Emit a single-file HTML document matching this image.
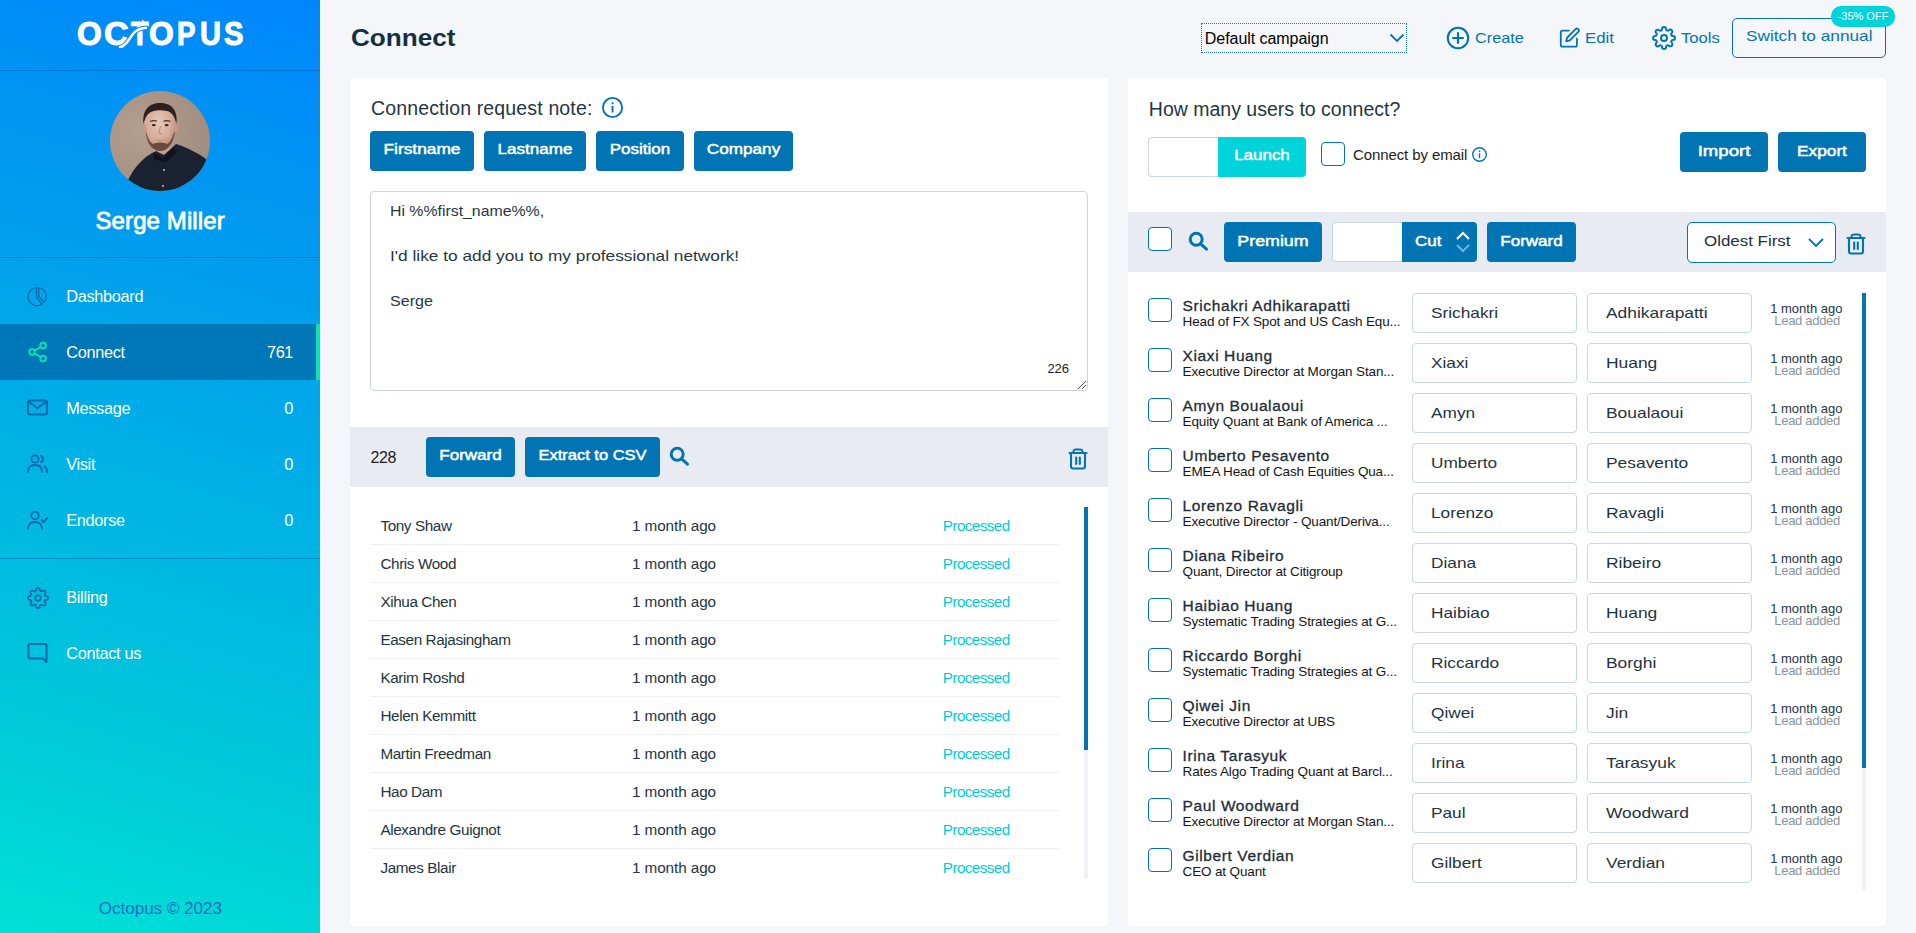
<!DOCTYPE html>
<html><head><meta charset="utf-8"><title>Octopus - Connect</title>
<style>
html,body{margin:0;padding:0;}
body{width:1916px;height:933px;position:relative;overflow:hidden;background:#f5f6fa;font-family:'Liberation Sans', sans-serif;}
.t{position:absolute;line-height:1;white-space:nowrap;}
.r{position:absolute;}
</style></head><body>
<div class="r" id="sb" style="left:0;top:0;width:320px;height:933px;background:linear-gradient(196deg,#0086fc 0%,#00a1ec 33%,#00cada 79%,#00e1d6 100%)"></div>
<div class="r" style="left:0px;top:70px;width:320px;height:1px;background:rgba(0,90,170,0.45)"></div>
<div class="r" style="left:0px;top:257px;width:320px;height:1px;background:rgba(0,90,170,0.45)"></div>
<div class="r" style="left:0px;top:558px;width:320px;height:1px;background:rgba(0,90,170,0.45)"></div>
<div class="t" style="left:77.32083333333333px;top:18.17px;font-size:32.5px;color:#fff;font-weight:700;-webkit-text-stroke:1.1px #fff;transform:scaleX(0.979);transform-origin:0 0;">O</div>
<div class="t" style="left:103.95454545454545px;top:18.17px;font-size:32.5px;color:#fff;font-weight:700;-webkit-text-stroke:1.1px #fff;transform:scaleX(1.045);transform-origin:0 0;">C</div>
<div class="t" style="left:131.0px;top:18.17px;font-size:32.5px;color:#fff;font-weight:700;-webkit-text-stroke:1.1px #fff;transform:scaleX(0.885);transform-origin:0 0;">T</div>
<div class="t" style="left:149.32083333333335px;top:18.17px;font-size:32.5px;color:#fff;font-weight:700;-webkit-text-stroke:1.1px #fff;transform:scaleX(0.979);transform-origin:0 0;">O</div>
<div class="t" style="left:176.79473684210527px;top:18.17px;font-size:32.5px;color:#fff;font-weight:700;-webkit-text-stroke:1.1px #fff;transform:scaleX(0.853);transform-origin:0 0;">P</div>
<div class="t" style="left:200.1095238095238px;top:18.17px;font-size:32.5px;color:#fff;font-weight:700;-webkit-text-stroke:1.1px #fff;transform:scaleX(0.890);transform-origin:0 0;">U</div>
<div class="t" style="left:223.9px;top:18.17px;font-size:32.5px;color:#fff;font-weight:700;-webkit-text-stroke:1.1px #fff;transform:scaleX(0.895);transform-origin:0 0;">S</div>
<svg class="r" style="left:100px;top:10px;" width="60" height="45" viewBox="0 0 60 45" fill="none"><path d="M20 37 C26 36.5 29 29 32.5 24.5 C35.5 20.5 39 18.5 46 17.8" stroke="#0089f7" stroke-width="4.6" stroke-linecap="round" fill="none"/><path d="M20 37 C26 36.5 29 29 32.5 24.5 C35.5 20.5 39 18.5 46 17.8" stroke="#fff" stroke-width="2.6" stroke-linecap="round" fill="none"/><path d="M42.5 10.5 L45 13" stroke="#fff" stroke-width="1.2" stroke-linecap="round" fill="none"/></svg>
<svg class="r" style="left:110px;top:91px;" width="100" height="100" viewBox="0 0 100 100" fill="none"><defs><clipPath id="av"><circle cx="50" cy="50" r="50"/></clipPath><radialGradient id="bgav" cx="0.3" cy="0.4" r="0.8"><stop offset="0" stop-color="#b39e90"/><stop offset="1" stop-color="#9f8a7d"/></radialGradient><radialGradient id="face" cx="0.45" cy="0.4" r="0.6"><stop offset="0" stop-color="#e6c7b6"/><stop offset="0.7" stop-color="#d4ab97"/><stop offset="1" stop-color="#b98f7d"/></radialGradient></defs><g clip-path="url(#av)"><rect width="100" height="100" fill="url(#bgav)"/><path d="M42 50 L60 48 L62 62 L44 64Z" fill="#c89c88"/><path d="M14 100 C18 86 26 74 36 66 C40 63 44 61 46 60 L54 64 L66 53 C76 56 88 62 96 68 L100 100Z" fill="#1a2232"/><path d="M44 61 L53 68 L64 56 L66 62 L56 72 L44 68Z" fill="#0e131c"/><ellipse cx="50" cy="35.5" rx="15.5" ry="22" fill="url(#face)"/><path d="M35.5 38 C36 52 42 60 50 60 C58 60 64.5 52 65 38 C63 46 60 52 57 53 C53 51 47 51 43 53 C40 52 37 46 35.5 38Z" fill="#5e4239" opacity="0.9"/><path d="M43 47.5 C47 49.5 53 49.5 57 47.5 C54 50 46 50 43 47.5Z" fill="#8a5a50"/><path d="M33.5 33 C32 18 40 12 50 12 C61 12 68 18 66.5 33 C65 26 62 21 57 20 C52 19 45 19 41 21 C37 23 35 27 33.5 33Z" fill="#2a201e"/><path d="M40 30.5 Q43.5 28.8 47 30.2 M53.5 30.2 Q57 28.8 60.5 30.5" stroke="#4a342c" stroke-width="1.2" fill="none"/><ellipse cx="43.8" cy="34.2" rx="2" ry="1.1" fill="#3b2a24"/><ellipse cx="56.6" cy="34.2" rx="2" ry="1.1" fill="#3b2a24"/><path d="M50.5 35 L49 42.5 L52 43" stroke="#b98a76" stroke-width="1" fill="none"/><ellipse cx="34.5" cy="37" rx="2" ry="4" fill="#c99b86"/><ellipse cx="65.5" cy="37" rx="2" ry="4" fill="#c99b86"/><circle cx="54" cy="79" r="0.9" fill="#d0d0d0"/><circle cx="53" cy="95" r="0.9" fill="#d0d0d0"/></g></svg>
<div class="t" style="left:95.5px;top:209.40px;font-size:24px;color:#fff;letter-spacing:0.1px;-webkit-text-stroke:0.8px #fff;">Serge Miller</div>
<div class="r" style="left:0px;top:324px;width:320px;height:56px;background:#0077b6"></div>
<div class="r" style="left:316px;top:324px;width:4px;height:56px;background:#00e6b4"></div>
<div class="t" style="left:66.2px;top:288.14px;font-size:16.3px;color:#fff;letter-spacing:-0.3px;">Dashboard</div>
<div class="t" style="left:66.2px;top:344.14px;font-size:16.3px;color:#fff;letter-spacing:-0.3px;">Connect</div>
<div class="t" style="left:193px;top:344.14px;font-size:16.3px;color:#fff;letter-spacing:-0.4px;width:100px;text-align:right;">761</div>
<div class="t" style="left:66.2px;top:400.14px;font-size:16.3px;color:#fff;letter-spacing:-0.3px;">Message</div>
<div class="t" style="left:193px;top:400.14px;font-size:16.3px;color:#fff;letter-spacing:-0.4px;width:100px;text-align:right;">0</div>
<div class="t" style="left:66.2px;top:456.14px;font-size:16.3px;color:#fff;letter-spacing:-0.3px;">Visit</div>
<div class="t" style="left:193px;top:456.14px;font-size:16.3px;color:#fff;letter-spacing:-0.4px;width:100px;text-align:right;">0</div>
<div class="t" style="left:66.2px;top:512.14px;font-size:16.3px;color:#fff;letter-spacing:-0.3px;">Endorse</div>
<div class="t" style="left:193px;top:512.14px;font-size:16.3px;color:#fff;letter-spacing:-0.4px;width:100px;text-align:right;">0</div>
<div class="t" style="left:66.2px;top:589.14px;font-size:16.3px;color:#fff;letter-spacing:-0.3px;">Billing</div>
<div class="t" style="left:66.2px;top:645.14px;font-size:16.3px;color:#fff;letter-spacing:-0.3px;">Contact us</div>
<svg class="r" style="left:27px;top:286px;" width="21" height="21" viewBox="-10.5 -10.5 21 21" fill="none"><g stroke="#0b6aae" stroke-width="1.3" stroke-linejoin="round" fill="none"><path d="M-1 -8.9 L-1 0.6 L4.4 7.7 A9 9 0 1 1 -1 -8.9 Z"/><path d="M1.2 -8.9 L1.2 -0.3 L6.5 5.8 A9 9 0 0 0 1.2 -8.9 Z"/></g></svg>
<svg class="r" style="left:27px;top:341px;" width="22" height="22" viewBox="0 0 24 24" fill="none"><g stroke="#00ecb4" stroke-width="1.9" fill="none"><circle cx="17.5" cy="5" r="3.1"/><circle cx="5.5" cy="12" r="3.1"/><circle cx="17.5" cy="19" r="3.1"/><line x1="8.2" y1="13.6" x2="14.8" y2="17.4"/><line x1="14.8" y1="6.6" x2="8.2" y2="10.4"/></g></svg>
<svg class="r" style="left:26px;top:397px;" width="23" height="21" viewBox="0 0 23 21" fill="none"><g stroke="#0b6aae" stroke-width="2" fill="none" stroke-linejoin="round"><rect x="2" y="3.5" width="19" height="14" rx="2"/><path d="M2.5 4.5 L11.5 11 L20.5 4.5"/></g></svg>
<svg class="r" style="left:26px;top:453px;" width="23" height="21" viewBox="0 0 23 21" fill="none"><g stroke="#0b6aae" stroke-width="1.8" fill="none" stroke-linecap="round"><circle cx="9" cy="6" r="3.6"/><path d="M2 19 C2 14 5 12 9 12 C13 12 16 14 16 19"/><path d="M15 2.8 C17.5 3.5 17.5 8.5 15 9.2"/><path d="M18.5 13.5 C20.5 14.5 21 16.5 21 19"/></g></svg>
<svg class="r" style="left:26px;top:509px;" width="23" height="22" viewBox="0 0 23 22" fill="none"><g stroke="#0b6aae" stroke-width="1.8" fill="none" stroke-linecap="round" stroke-linejoin="round"><circle cx="9" cy="6.5" r="3.8"/><path d="M2 20 C2 15 5 13 9 13 C13 13 16 15 16 20"/><path d="M15.5 11 L17.5 13 L21.5 9"/></g></svg>
<svg class="r" style="left:26.5px;top:586.5px;" width="22" height="22" viewBox="0 0 24 24" fill="none"><g stroke="#0b6aae" stroke-width="1.9" fill="none"><path d="M12 15a3 3 0 1 0 0-6 3 3 0 0 0 0 6z"/><path d="M19.4 15a1.65 1.65 0 0 0 .33 1.82l.06.06a2 2 0 0 1 0 2.83 2 2 0 0 1-2.83 0l-.06-.06a1.65 1.65 0 0 0-1.82-.33 1.65 1.65 0 0 0-1 1.51V21a2 2 0 0 1-2 2 2 2 0 0 1-2-2v-.09A1.65 1.65 0 0 0 9 19.4a1.65 1.65 0 0 0-1.82.33l-.06.06a2 2 0 0 1-2.83 0 2 2 0 0 1 0-2.83l.06-.06a1.65 1.65 0 0 0 .33-1.82 1.65 1.65 0 0 0-1.51-1H3a2 2 0 0 1-2-2 2 2 0 0 1 2-2h.09A1.65 1.65 0 0 0 4.6 9a1.65 1.65 0 0 0-.33-1.82l-.06-.06a2 2 0 0 1 0-2.83 2 2 0 0 1 2.83 0l.06.06a1.65 1.65 0 0 0 1.82.33H9a1.65 1.65 0 0 0 1-1.51V3a2 2 0 0 1 2-2 2 2 0 0 1 2 2v.09a1.65 1.65 0 0 0 1 1.51 1.65 1.65 0 0 0 1.82-.33l.06-.06a2 2 0 0 1 2.83 0 2 2 0 0 1 0 2.83l-.06.06a1.65 1.65 0 0 0-.33 1.82V9a1.65 1.65 0 0 0 1.51 1H21a2 2 0 0 1 2 2 2 2 0 0 1-2 2h-.09a1.65 1.65 0 0 0-1.51 1z"/></g></svg>
<svg class="r" style="left:27px;top:642px;" width="21" height="22" viewBox="0 0 21 22" fill="none"><g stroke="#0b6aae" stroke-width="2" fill="none" stroke-linejoin="round"><path d="M3 2 H18 A1.5 1.5 0 0 1 19.5 3.5 V20 L16 16.5 H3 A1.5 1.5 0 0 1 1.5 15 V3.5 A1.5 1.5 0 0 1 3 2Z"/></g></svg>
<div class="t" style="left:98.8px;top:900.35px;font-size:17px;color:#1570c0;">Octopus © 2023</div>
<div class="t" style="left:351px;top:26.00px;font-size:24px;color:#15303f;transform:scaleX(1.089);transform-origin:0 0;font-weight:700;">Connect</div>
<div class="r" style="left:1201px;top:23px;width:206px;height:30px;border:1px dotted #1a78b8;box-sizing:border-box"></div>
<div class="t" style="left:1204.8px;top:30.80px;font-size:16px;color:#000;letter-spacing:-0.05px;">Default campaign</div>
<svg class="r" style="left:1389px;top:32px;" width="16" height="12" viewBox="0 0 16 12" fill="none"><path d="M1.5 2.5 L8 9 L14.5 2.5" stroke="#0175b3" stroke-width="1.8" fill="none"/></svg>
<svg class="r" style="left:1446px;top:26px;" width="24" height="24" viewBox="0 0 24 24" fill="none"><g stroke="#0175b3" stroke-width="2.1" fill="none" stroke-linecap="round"><circle cx="12" cy="12" r="10.2"/><line x1="12" y1="7" x2="12" y2="17"/><line x1="7" y1="12" x2="17" y2="12"/></g></svg>
<div class="t" style="left:1474.6px;top:30.15px;font-size:15px;color:#0175b3;transform:scaleX(1.087);transform-origin:0 0;">Create</div>
<svg class="r" style="left:1559.3px;top:27px;" width="21.5" height="21.5" viewBox="0 0 24 24" fill="none"><g stroke="#0175b3" stroke-width="2" fill="none" stroke-linecap="round" stroke-linejoin="round"><path d="M11 4H4a2 2 0 0 0-2 2v14a2 2 0 0 0 2 2h14a2 2 0 0 0 2-2v-7"/><path d="M18.5 2.5a2.121 2.121 0 0 1 3 3L12 15l-4 1 1-4 9.5-9.5z"/></g></svg>
<div class="t" style="left:1585.2px;top:30.15px;font-size:15px;color:#0175b3;transform:scaleX(1.12);transform-origin:0 0;">Edit</div>
<svg class="r" style="left:1652px;top:26px;" width="24" height="24" viewBox="0 0 24 24" fill="none"><g stroke="#0175b3" stroke-width="2" fill="none"><path d="M12 15a3 3 0 1 0 0-6 3 3 0 0 0 0 6z"/><path d="M19.4 15a1.65 1.65 0 0 0 .33 1.82l.06.06a2 2 0 0 1 0 2.83 2 2 0 0 1-2.83 0l-.06-.06a1.65 1.65 0 0 0-1.82-.33 1.65 1.65 0 0 0-1 1.51V21a2 2 0 0 1-2 2 2 2 0 0 1-2-2v-.09A1.65 1.65 0 0 0 9 19.4a1.65 1.65 0 0 0-1.82.33l-.06.06a2 2 0 0 1-2.83 0 2 2 0 0 1 0-2.83l.06-.06a1.65 1.65 0 0 0 .33-1.82 1.65 1.65 0 0 0-1.51-1H3a2 2 0 0 1-2-2 2 2 0 0 1 2-2h.09A1.65 1.65 0 0 0 4.6 9a1.65 1.65 0 0 0-.33-1.82l-.06-.06a2 2 0 0 1 0-2.83 2 2 0 0 1 2.83 0l.06.06a1.65 1.65 0 0 0 1.82.33H9a1.65 1.65 0 0 0 1-1.51V3a2 2 0 0 1 2-2 2 2 0 0 1 2 2v.09a1.65 1.65 0 0 0 1 1.51 1.65 1.65 0 0 0 1.82-.33l.06-.06a2 2 0 0 1 2.83 0 2 2 0 0 1 0 2.83l-.06.06a1.65 1.65 0 0 0-.33 1.82V9a1.65 1.65 0 0 0 1.51 1H21a2 2 0 0 1 2 2 2 2 0 0 1-2 2h-.09a1.65 1.65 0 0 0-1.51 1z"/></g></svg>
<div class="t" style="left:1680.7px;top:29.95px;font-size:15px;color:#0175b3;transform:scaleX(1.106);transform-origin:0 0;">Tools</div>
<div class="r" style="left:1732px;top:18px;width:154px;height:40px;border:1px solid #0175b3;border-radius:5px;box-sizing:border-box"></div>
<div class="t" style="left:1745.8px;top:27.95px;font-size:15px;color:#0175b3;transform:scaleX(1.149);transform-origin:0 0;">Switch to annual</div>
<div class="r" style="left:1831px;top:6px;width:64px;height:20.5px;background:#00d3da;border-radius:10px"></div>
<div class="t" style="left:1831px;top:10.85px;font-size:11px;color:#fff;width:64px;text-align:center;">-35% OFF</div>
<div class="r" style="left:350px;top:78px;width:758px;height:848px;background:#fff;border-radius:4px"></div>
<div class="t" style="left:371px;top:98.62px;font-size:19.5px;color:#233642;letter-spacing:0.15px;">Connection request note:</div>
<svg class="r" style="left:601px;top:96px;" width="23" height="23" viewBox="0 0 23 23" fill="none"><g stroke="#0175b3" stroke-width="1.9" fill="none"><circle cx="11.5" cy="11.5" r="9.6"/></g><rect x="10.6" y="10" width="1.9" height="6.5" fill="#0175b3"/><circle cx="11.55" cy="7.3" r="1.15" fill="#0175b3"/></svg>
<div class="r" style="left:370px;top:131px;width:104px;height:40px;background:#0175b3;border-radius:4px"></div>
<div class="t" style="left:370px;top:141.25px;font-size:15px;color:#fff;transform:scaleX(1.154);transform-origin:50% 0;width:104px;text-align:center;-webkit-text-stroke:0.5px #fff;">Firstname</div>
<div class="r" style="left:484px;top:131px;width:102px;height:40px;background:#0175b3;border-radius:4px"></div>
<div class="t" style="left:484px;top:141.25px;font-size:15px;color:#fff;transform:scaleX(1.135);transform-origin:50% 0;width:102px;text-align:center;-webkit-text-stroke:0.5px #fff;">Lastname</div>
<div class="r" style="left:596px;top:131px;width:88px;height:40px;background:#0175b3;border-radius:4px"></div>
<div class="t" style="left:596px;top:141.25px;font-size:15px;color:#fff;transform:scaleX(1.133);transform-origin:50% 0;width:88px;text-align:center;-webkit-text-stroke:0.5px #fff;">Position</div>
<div class="r" style="left:694px;top:131px;width:99px;height:40px;background:#0175b3;border-radius:4px"></div>
<div class="t" style="left:694px;top:141.25px;font-size:15px;color:#fff;transform:scaleX(1.145);transform-origin:50% 0;width:99px;text-align:center;-webkit-text-stroke:0.5px #fff;">Company</div>
<div class="r" style="left:370px;top:191px;width:718px;height:200px;border:1px solid #c9d6df;border-radius:4px;box-sizing:border-box"></div>
<div class="t" style="left:389.9px;top:203.25px;font-size:15px;color:#28363f;transform:scaleX(1.056);transform-origin:0 0;">Hi %%first_name%%,</div>
<div class="t" style="left:389.9px;top:248.25px;font-size:15px;color:#28363f;transform:scaleX(1.152);transform-origin:0 0;">I'd like to add you to my professional network!</div>
<div class="t" style="left:389.9px;top:292.75px;font-size:15px;color:#28363f;transform:scaleX(1.07);transform-origin:0 0;">Serge</div>
<div class="t" style="left:1047.4px;top:361.95px;font-size:13px;color:#222;">226</div>
<svg class="r" style="left:1077px;top:380px;" width="10" height="10" viewBox="0 0 10 10" fill="none"><g stroke="#555" stroke-width="1"><line x1="1" y1="9" x2="9" y2="1"/><line x1="5" y1="9" x2="9" y2="5"/></g></svg>
<div class="r" style="left:350px;top:427px;width:758px;height:60px;background:#e8ebf2"></div>
<div class="t" style="left:370.6px;top:449.90px;font-size:16px;color:#222;letter-spacing:-0.5px;">228</div>
<div class="r" style="left:426px;top:437px;width:89px;height:40px;background:#0175b3;border-radius:4px"></div>
<div class="t" style="left:426px;top:447.25px;font-size:15px;color:#fff;transform:scaleX(1.135);transform-origin:50% 0;width:89px;text-align:center;-webkit-text-stroke:0.5px #fff;">Forward</div>
<div class="r" style="left:525px;top:437px;width:135px;height:40px;background:#0175b3;border-radius:4px"></div>
<div class="t" style="left:525px;top:447.25px;font-size:15px;color:#fff;transform:scaleX(1.1);transform-origin:50% 0;width:135px;text-align:center;-webkit-text-stroke:0.5px #fff;">Extract to CSV</div>
<svg class="r" style="left:669px;top:446px;" width="21" height="21" viewBox="0 0 21 21" fill="none"><g stroke="#0175b3" stroke-width="3" fill="none" stroke-linecap="round"><circle cx="8.2" cy="8.2" r="6"/><line x1="12.6" y1="12.8" x2="18.5" y2="18.2"/></g></svg>
<svg class="r" style="left:1068px;top:448px;" width="20" height="22" viewBox="0 0 20 22" fill="none"><g stroke="#0175b3" stroke-width="2.1" fill="none" stroke-linecap="round" stroke-linejoin="round"><line x1="1.5" y1="5" x2="18.5" y2="5"/><path d="M5.5 5 V3.2 A2 2 0 0 1 7.5 1.5 H12.5 A2 2 0 0 1 14.5 3.2 V5"/><path d="M3 5 V18.5 A2 2 0 0 0 5 20.5 H15 A2 2 0 0 0 17 18.5 V5"/><line x1="8.2" y1="9.5" x2="8.2" y2="16"/><line x1="11.8" y1="9.5" x2="11.8" y2="16"/></g></svg>
<div class="r" style="left:350px;top:505px;width:758px;height:374px;overflow:hidden">
<div class="t" style="left:30.399999999999977px;top:13.00px;font-size:15.3px;color:#26343e;letter-spacing:-0.4px;">Tony Shaw</div>
<div class="t" style="left:282px;top:13.00px;font-size:15.3px;color:#26343e;letter-spacing:-0.1px;">1 month ago</div>
<div class="t" style="left:592.8px;top:13.00px;font-size:15.3px;color:#00cdd6;letter-spacing:-0.6px;">Processed</div>
<div class="r" style="left:20px;top:39px;width:689px;height:1px;background:#edf0f5"></div>
<div class="t" style="left:30.399999999999977px;top:51.00px;font-size:15.3px;color:#26343e;letter-spacing:-0.4px;">Chris Wood</div>
<div class="t" style="left:282px;top:51.00px;font-size:15.3px;color:#26343e;letter-spacing:-0.1px;">1 month ago</div>
<div class="t" style="left:592.8px;top:51.00px;font-size:15.3px;color:#00cdd6;letter-spacing:-0.6px;">Processed</div>
<div class="r" style="left:20px;top:77px;width:689px;height:1px;background:#edf0f5"></div>
<div class="t" style="left:30.399999999999977px;top:89.00px;font-size:15.3px;color:#26343e;letter-spacing:-0.4px;">Xihua Chen</div>
<div class="t" style="left:282px;top:89.00px;font-size:15.3px;color:#26343e;letter-spacing:-0.1px;">1 month ago</div>
<div class="t" style="left:592.8px;top:89.00px;font-size:15.3px;color:#00cdd6;letter-spacing:-0.6px;">Processed</div>
<div class="r" style="left:20px;top:115px;width:689px;height:1px;background:#edf0f5"></div>
<div class="t" style="left:30.399999999999977px;top:127.00px;font-size:15.3px;color:#26343e;letter-spacing:-0.4px;">Easen Rajasingham</div>
<div class="t" style="left:282px;top:127.00px;font-size:15.3px;color:#26343e;letter-spacing:-0.1px;">1 month ago</div>
<div class="t" style="left:592.8px;top:127.00px;font-size:15.3px;color:#00cdd6;letter-spacing:-0.6px;">Processed</div>
<div class="r" style="left:20px;top:153px;width:689px;height:1px;background:#edf0f5"></div>
<div class="t" style="left:30.399999999999977px;top:165.00px;font-size:15.3px;color:#26343e;letter-spacing:-0.4px;">Karim Roshd</div>
<div class="t" style="left:282px;top:165.00px;font-size:15.3px;color:#26343e;letter-spacing:-0.1px;">1 month ago</div>
<div class="t" style="left:592.8px;top:165.00px;font-size:15.3px;color:#00cdd6;letter-spacing:-0.6px;">Processed</div>
<div class="r" style="left:20px;top:191px;width:689px;height:1px;background:#edf0f5"></div>
<div class="t" style="left:30.399999999999977px;top:203.00px;font-size:15.3px;color:#26343e;letter-spacing:-0.4px;">Helen Kemmitt</div>
<div class="t" style="left:282px;top:203.00px;font-size:15.3px;color:#26343e;letter-spacing:-0.1px;">1 month ago</div>
<div class="t" style="left:592.8px;top:203.00px;font-size:15.3px;color:#00cdd6;letter-spacing:-0.6px;">Processed</div>
<div class="r" style="left:20px;top:229px;width:689px;height:1px;background:#edf0f5"></div>
<div class="t" style="left:30.399999999999977px;top:241.00px;font-size:15.3px;color:#26343e;letter-spacing:-0.4px;">Martin Freedman</div>
<div class="t" style="left:282px;top:241.00px;font-size:15.3px;color:#26343e;letter-spacing:-0.1px;">1 month ago</div>
<div class="t" style="left:592.8px;top:241.00px;font-size:15.3px;color:#00cdd6;letter-spacing:-0.6px;">Processed</div>
<div class="r" style="left:20px;top:267px;width:689px;height:1px;background:#edf0f5"></div>
<div class="t" style="left:30.399999999999977px;top:279.00px;font-size:15.3px;color:#26343e;letter-spacing:-0.4px;">Hao Dam</div>
<div class="t" style="left:282px;top:279.00px;font-size:15.3px;color:#26343e;letter-spacing:-0.1px;">1 month ago</div>
<div class="t" style="left:592.8px;top:279.00px;font-size:15.3px;color:#00cdd6;letter-spacing:-0.6px;">Processed</div>
<div class="r" style="left:20px;top:305px;width:689px;height:1px;background:#edf0f5"></div>
<div class="t" style="left:30.399999999999977px;top:317.00px;font-size:15.3px;color:#26343e;letter-spacing:-0.4px;">Alexandre Guignot</div>
<div class="t" style="left:282px;top:317.00px;font-size:15.3px;color:#26343e;letter-spacing:-0.1px;">1 month ago</div>
<div class="t" style="left:592.8px;top:317.00px;font-size:15.3px;color:#00cdd6;letter-spacing:-0.6px;">Processed</div>
<div class="r" style="left:20px;top:343px;width:689px;height:1px;background:#edf0f5"></div>
<div class="t" style="left:30.399999999999977px;top:355.00px;font-size:15.3px;color:#26343e;letter-spacing:-0.4px;">James Blair</div>
<div class="t" style="left:282px;top:355.00px;font-size:15.3px;color:#26343e;letter-spacing:-0.1px;">1 month ago</div>
<div class="t" style="left:592.8px;top:355.00px;font-size:15.3px;color:#00cdd6;letter-spacing:-0.6px;">Processed</div>
<div class="r" style="left:20px;top:381px;width:689px;height:1px;background:#edf0f5"></div>
</div>
<div class="r" style="left:1084px;top:507px;width:4px;height:372px;background:#f1f3f8"></div>
<div class="r" style="left:1084px;top:507px;width:4px;height:243px;background:#0175b3"></div>
<div class="r" style="left:1128px;top:78px;width:758px;height:848px;background:#fff;border-radius:4px"></div>
<div class="t" style="left:1148.8px;top:99.52px;font-size:19.5px;color:#233642;">How many users to connect?</div>
<div class="r" style="left:1148px;top:137px;width:70px;height:40px;border:1px solid #c9d6df;border-right:none;border-radius:4px 0 0 4px;box-sizing:border-box"></div>
<div class="r" style="left:1218px;top:137px;width:88px;height:40px;background:#00d3da;border-radius:0 4px 4px 0"></div>
<div class="t" style="left:1218px;top:147.25px;font-size:15px;color:#fff;transform:scaleX(1.13);transform-origin:50% 0;width:88px;text-align:center;-webkit-text-stroke:0.5px #fff;">Launch</div>
<div class="r" style="left:1321px;top:142px;width:24px;height:24px;border:1.5px solid #0175b3;border-radius:4px;box-sizing:border-box"></div>
<div class="t" style="left:1353px;top:147.45px;font-size:15px;color:#222;letter-spacing:-0.1px;">Connect by email</div>
<svg class="r" style="left:1471px;top:146px;" width="17" height="17" viewBox="0 0 17 17" fill="none"><circle cx="8.5" cy="8.5" r="6.8" stroke="#0175b3" stroke-width="1.4" fill="none"/><rect x="7.8" y="7.3" width="1.4" height="4.8" fill="#0175b3"/><circle cx="8.5" cy="5.3" r="0.9" fill="#0175b3"/></svg>
<div class="r" style="left:1680px;top:132px;width:88px;height:40px;background:#0175b3;border-radius:4px"></div>
<div class="t" style="left:1680px;top:142.75px;font-size:15px;color:#fff;transform:scaleX(1.24);transform-origin:50% 0;width:88px;text-align:center;-webkit-text-stroke:0.5px #fff;">Import</div>
<div class="r" style="left:1778px;top:132px;width:88px;height:40px;background:#0175b3;border-radius:4px"></div>
<div class="t" style="left:1778px;top:142.75px;font-size:15px;color:#fff;transform:scaleX(1.15);transform-origin:50% 0;width:88px;text-align:center;-webkit-text-stroke:0.5px #fff;">Export</div>
<div class="r" style="left:1128px;top:212px;width:758px;height:60px;background:#e8ebf2"></div>
<div class="r" style="left:1148px;top:227px;width:24px;height:24px;background:#fff;border:1.5px solid #0175b3;border-radius:4px;box-sizing:border-box"></div>
<svg class="r" style="left:1188px;top:231px;" width="21" height="21" viewBox="0 0 21 21" fill="none"><g stroke="#0175b3" stroke-width="3" fill="none" stroke-linecap="round"><circle cx="8.2" cy="8.2" r="6"/><line x1="12.6" y1="12.8" x2="18.5" y2="18.2"/></g></svg>
<div class="r" style="left:1224px;top:222px;width:98px;height:40px;background:#0175b3;border-radius:4px"></div>
<div class="t" style="left:1224px;top:233.25px;font-size:15px;color:#fff;transform:scaleX(1.187);transform-origin:50% 0;width:98px;text-align:center;-webkit-text-stroke:0.5px #fff;">Premium</div>
<div class="r" style="left:1332px;top:222px;width:70px;height:40px;background:#fff;border:1px solid #c9d6df;border-right:none;border-radius:4px 0 0 4px;box-sizing:border-box"></div>
<div class="r" style="left:1402px;top:222px;width:75px;height:40px;background:#0175b3;border-radius:0 4px 4px 0"></div>
<div class="r" style="left:1449px;top:222px;width:1px;height:40px;background:rgba(0,40,80,0.12)"></div>
<div class="t" style="left:1415.2px;top:233.25px;font-size:15px;color:#fff;transform:scaleX(1.133);transform-origin:0 0;-webkit-text-stroke:0.5px #fff;">Cut</div>
<svg class="r" style="left:1455px;top:230px;" width="16" height="24" viewBox="0 0 16 24" fill="none"><path d="M2 9 L8 3 L14 9" stroke="#fff" stroke-width="2" fill="none"/><path d="M2 15 L8 21 L14 15" stroke="rgba(255,255,255,0.45)" stroke-width="2" fill="none"/></svg>
<div class="r" style="left:1487px;top:222px;width:89px;height:40px;background:#0175b3;border-radius:4px"></div>
<div class="t" style="left:1487px;top:233.25px;font-size:15px;color:#fff;transform:scaleX(1.135);transform-origin:50% 0;width:89px;text-align:center;-webkit-text-stroke:0.5px #fff;">Forward</div>
<div class="r" style="left:1687px;top:222px;width:149px;height:41px;background:#fff;border:1px solid #0175b3;border-radius:5px;box-sizing:border-box"></div>
<div class="t" style="left:1703.5px;top:233.25px;font-size:15px;color:#1c2f3b;transform:scaleX(1.128);transform-origin:0 0;">Oldest First</div>
<svg class="r" style="left:1807px;top:236px;" width="18" height="13" viewBox="0 0 18 13" fill="none"><path d="M2 3 L9 10 L16 3" stroke="#0175b3" stroke-width="1.9" fill="none"/></svg>
<svg class="r" style="left:1846px;top:233px;" width="20" height="22" viewBox="0 0 20 22" fill="none"><g stroke="#0175b3" stroke-width="2.1" fill="none" stroke-linecap="round" stroke-linejoin="round"><line x1="1.5" y1="5" x2="18.5" y2="5"/><path d="M5.5 5 V3.2 A2 2 0 0 1 7.5 1.5 H12.5 A2 2 0 0 1 14.5 3.2 V5"/><path d="M3 5 V18.5 A2 2 0 0 0 5 20.5 H15 A2 2 0 0 0 17 18.5 V5"/><line x1="8.2" y1="9.5" x2="8.2" y2="16"/><line x1="11.8" y1="9.5" x2="11.8" y2="16"/></g></svg>
<div class="r" style="left:1148px;top:298px;width:24px;height:24px;border:1.5px solid #0175b3;border-radius:4px;box-sizing:border-box"></div>
<div class="t" style="left:1182.6px;top:297.62px;font-size:15.5px;color:#1d2c37;letter-spacing:0.6px;-webkit-text-stroke:0.3px #1d2c37;">Srichakri Adhikarapatti</div>
<div class="t" style="left:1182.6px;top:315.32px;font-size:13.5px;color:#151515;letter-spacing:-0.15px;">Head of FX Spot and US Cash Equ...</div>
<div class="r" style="left:1412px;top:293px;width:165px;height:40px;border:1px solid #c9d6df;border-radius:4px;box-sizing:border-box"></div>
<div class="r" style="left:1587px;top:293px;width:165px;height:40px;border:1px solid #c9d6df;border-radius:4px;box-sizing:border-box"></div>
<div class="t" style="left:1430.7px;top:305.25px;font-size:15px;color:#1f3340;transform:scaleX(1.15);transform-origin:0 0;">Srichakri</div>
<div class="t" style="left:1606.2px;top:305.25px;font-size:15px;color:#1f3340;transform:scaleX(1.16);transform-origin:0 0;">Adhikarapatti</div>
<div class="t" style="left:1770.2px;top:301.75px;font-size:13px;color:#26343e;">1 month ago</div>
<div class="t" style="left:1774.3px;top:314.35px;font-size:13px;color:#8796a1;letter-spacing:-0.3px;">Lead added</div>
<div class="r" style="left:1148px;top:348px;width:24px;height:24px;border:1.5px solid #0175b3;border-radius:4px;box-sizing:border-box"></div>
<div class="t" style="left:1182.6px;top:347.62px;font-size:15.5px;color:#1d2c37;letter-spacing:0.6px;-webkit-text-stroke:0.3px #1d2c37;">Xiaxi Huang</div>
<div class="t" style="left:1182.6px;top:365.32px;font-size:13.5px;color:#151515;letter-spacing:-0.15px;">Executive Director at Morgan Stan...</div>
<div class="r" style="left:1412px;top:343px;width:165px;height:40px;border:1px solid #c9d6df;border-radius:4px;box-sizing:border-box"></div>
<div class="r" style="left:1587px;top:343px;width:165px;height:40px;border:1px solid #c9d6df;border-radius:4px;box-sizing:border-box"></div>
<div class="t" style="left:1430.7px;top:355.25px;font-size:15px;color:#1f3340;transform:scaleX(1.15);transform-origin:0 0;">Xiaxi</div>
<div class="t" style="left:1606.2px;top:355.25px;font-size:15px;color:#1f3340;transform:scaleX(1.16);transform-origin:0 0;">Huang</div>
<div class="t" style="left:1770.2px;top:351.75px;font-size:13px;color:#26343e;">1 month ago</div>
<div class="t" style="left:1774.3px;top:364.35px;font-size:13px;color:#8796a1;letter-spacing:-0.3px;">Lead added</div>
<div class="r" style="left:1148px;top:398px;width:24px;height:24px;border:1.5px solid #0175b3;border-radius:4px;box-sizing:border-box"></div>
<div class="t" style="left:1182.6px;top:397.62px;font-size:15.5px;color:#1d2c37;letter-spacing:0.6px;-webkit-text-stroke:0.3px #1d2c37;">Amyn Boualaoui</div>
<div class="t" style="left:1182.6px;top:415.32px;font-size:13.5px;color:#151515;letter-spacing:-0.15px;">Equity Quant at Bank of America ...</div>
<div class="r" style="left:1412px;top:393px;width:165px;height:40px;border:1px solid #c9d6df;border-radius:4px;box-sizing:border-box"></div>
<div class="r" style="left:1587px;top:393px;width:165px;height:40px;border:1px solid #c9d6df;border-radius:4px;box-sizing:border-box"></div>
<div class="t" style="left:1430.7px;top:405.25px;font-size:15px;color:#1f3340;transform:scaleX(1.15);transform-origin:0 0;">Amyn</div>
<div class="t" style="left:1606.2px;top:405.25px;font-size:15px;color:#1f3340;transform:scaleX(1.16);transform-origin:0 0;">Boualaoui</div>
<div class="t" style="left:1770.2px;top:401.75px;font-size:13px;color:#26343e;">1 month ago</div>
<div class="t" style="left:1774.3px;top:414.35px;font-size:13px;color:#8796a1;letter-spacing:-0.3px;">Lead added</div>
<div class="r" style="left:1148px;top:448px;width:24px;height:24px;border:1.5px solid #0175b3;border-radius:4px;box-sizing:border-box"></div>
<div class="t" style="left:1182.6px;top:447.62px;font-size:15.5px;color:#1d2c37;letter-spacing:0.6px;-webkit-text-stroke:0.3px #1d2c37;">Umberto Pesavento</div>
<div class="t" style="left:1182.6px;top:465.32px;font-size:13.5px;color:#151515;letter-spacing:-0.15px;">EMEA Head of Cash Equities Qua...</div>
<div class="r" style="left:1412px;top:443px;width:165px;height:40px;border:1px solid #c9d6df;border-radius:4px;box-sizing:border-box"></div>
<div class="r" style="left:1587px;top:443px;width:165px;height:40px;border:1px solid #c9d6df;border-radius:4px;box-sizing:border-box"></div>
<div class="t" style="left:1430.7px;top:455.25px;font-size:15px;color:#1f3340;transform:scaleX(1.15);transform-origin:0 0;">Umberto</div>
<div class="t" style="left:1606.2px;top:455.25px;font-size:15px;color:#1f3340;transform:scaleX(1.16);transform-origin:0 0;">Pesavento</div>
<div class="t" style="left:1770.2px;top:451.75px;font-size:13px;color:#26343e;">1 month ago</div>
<div class="t" style="left:1774.3px;top:464.35px;font-size:13px;color:#8796a1;letter-spacing:-0.3px;">Lead added</div>
<div class="r" style="left:1148px;top:498px;width:24px;height:24px;border:1.5px solid #0175b3;border-radius:4px;box-sizing:border-box"></div>
<div class="t" style="left:1182.6px;top:497.62px;font-size:15.5px;color:#1d2c37;letter-spacing:0.6px;-webkit-text-stroke:0.3px #1d2c37;">Lorenzo Ravagli</div>
<div class="t" style="left:1182.6px;top:515.32px;font-size:13.5px;color:#151515;letter-spacing:-0.15px;">Executive Director - Quant/Deriva...</div>
<div class="r" style="left:1412px;top:493px;width:165px;height:40px;border:1px solid #c9d6df;border-radius:4px;box-sizing:border-box"></div>
<div class="r" style="left:1587px;top:493px;width:165px;height:40px;border:1px solid #c9d6df;border-radius:4px;box-sizing:border-box"></div>
<div class="t" style="left:1430.7px;top:505.25px;font-size:15px;color:#1f3340;transform:scaleX(1.15);transform-origin:0 0;">Lorenzo</div>
<div class="t" style="left:1606.2px;top:505.25px;font-size:15px;color:#1f3340;transform:scaleX(1.16);transform-origin:0 0;">Ravagli</div>
<div class="t" style="left:1770.2px;top:501.75px;font-size:13px;color:#26343e;">1 month ago</div>
<div class="t" style="left:1774.3px;top:514.35px;font-size:13px;color:#8796a1;letter-spacing:-0.3px;">Lead added</div>
<div class="r" style="left:1148px;top:548px;width:24px;height:24px;border:1.5px solid #0175b3;border-radius:4px;box-sizing:border-box"></div>
<div class="t" style="left:1182.6px;top:547.62px;font-size:15.5px;color:#1d2c37;letter-spacing:0.6px;-webkit-text-stroke:0.3px #1d2c37;">Diana Ribeiro</div>
<div class="t" style="left:1182.6px;top:565.32px;font-size:13.5px;color:#151515;letter-spacing:-0.15px;">Quant, Director at Citigroup</div>
<div class="r" style="left:1412px;top:543px;width:165px;height:40px;border:1px solid #c9d6df;border-radius:4px;box-sizing:border-box"></div>
<div class="r" style="left:1587px;top:543px;width:165px;height:40px;border:1px solid #c9d6df;border-radius:4px;box-sizing:border-box"></div>
<div class="t" style="left:1430.7px;top:555.25px;font-size:15px;color:#1f3340;transform:scaleX(1.15);transform-origin:0 0;">Diana</div>
<div class="t" style="left:1606.2px;top:555.25px;font-size:15px;color:#1f3340;transform:scaleX(1.16);transform-origin:0 0;">Ribeiro</div>
<div class="t" style="left:1770.2px;top:551.75px;font-size:13px;color:#26343e;">1 month ago</div>
<div class="t" style="left:1774.3px;top:564.35px;font-size:13px;color:#8796a1;letter-spacing:-0.3px;">Lead added</div>
<div class="r" style="left:1148px;top:598px;width:24px;height:24px;border:1.5px solid #0175b3;border-radius:4px;box-sizing:border-box"></div>
<div class="t" style="left:1182.6px;top:597.62px;font-size:15.5px;color:#1d2c37;letter-spacing:0.6px;-webkit-text-stroke:0.3px #1d2c37;">Haibiao Huang</div>
<div class="t" style="left:1182.6px;top:615.32px;font-size:13.5px;color:#151515;letter-spacing:-0.15px;">Systematic Trading Strategies at G...</div>
<div class="r" style="left:1412px;top:593px;width:165px;height:40px;border:1px solid #c9d6df;border-radius:4px;box-sizing:border-box"></div>
<div class="r" style="left:1587px;top:593px;width:165px;height:40px;border:1px solid #c9d6df;border-radius:4px;box-sizing:border-box"></div>
<div class="t" style="left:1430.7px;top:605.25px;font-size:15px;color:#1f3340;transform:scaleX(1.15);transform-origin:0 0;">Haibiao</div>
<div class="t" style="left:1606.2px;top:605.25px;font-size:15px;color:#1f3340;transform:scaleX(1.16);transform-origin:0 0;">Huang</div>
<div class="t" style="left:1770.2px;top:601.75px;font-size:13px;color:#26343e;">1 month ago</div>
<div class="t" style="left:1774.3px;top:614.35px;font-size:13px;color:#8796a1;letter-spacing:-0.3px;">Lead added</div>
<div class="r" style="left:1148px;top:648px;width:24px;height:24px;border:1.5px solid #0175b3;border-radius:4px;box-sizing:border-box"></div>
<div class="t" style="left:1182.6px;top:647.62px;font-size:15.5px;color:#1d2c37;letter-spacing:0.6px;-webkit-text-stroke:0.3px #1d2c37;">Riccardo Borghi</div>
<div class="t" style="left:1182.6px;top:665.32px;font-size:13.5px;color:#151515;letter-spacing:-0.15px;">Systematic Trading Strategies at G...</div>
<div class="r" style="left:1412px;top:643px;width:165px;height:40px;border:1px solid #c9d6df;border-radius:4px;box-sizing:border-box"></div>
<div class="r" style="left:1587px;top:643px;width:165px;height:40px;border:1px solid #c9d6df;border-radius:4px;box-sizing:border-box"></div>
<div class="t" style="left:1430.7px;top:655.25px;font-size:15px;color:#1f3340;transform:scaleX(1.15);transform-origin:0 0;">Riccardo</div>
<div class="t" style="left:1606.2px;top:655.25px;font-size:15px;color:#1f3340;transform:scaleX(1.16);transform-origin:0 0;">Borghi</div>
<div class="t" style="left:1770.2px;top:651.75px;font-size:13px;color:#26343e;">1 month ago</div>
<div class="t" style="left:1774.3px;top:664.35px;font-size:13px;color:#8796a1;letter-spacing:-0.3px;">Lead added</div>
<div class="r" style="left:1148px;top:698px;width:24px;height:24px;border:1.5px solid #0175b3;border-radius:4px;box-sizing:border-box"></div>
<div class="t" style="left:1182.6px;top:697.62px;font-size:15.5px;color:#1d2c37;letter-spacing:0.6px;-webkit-text-stroke:0.3px #1d2c37;">Qiwei Jin</div>
<div class="t" style="left:1182.6px;top:715.32px;font-size:13.5px;color:#151515;letter-spacing:-0.15px;">Executive Director at UBS</div>
<div class="r" style="left:1412px;top:693px;width:165px;height:40px;border:1px solid #c9d6df;border-radius:4px;box-sizing:border-box"></div>
<div class="r" style="left:1587px;top:693px;width:165px;height:40px;border:1px solid #c9d6df;border-radius:4px;box-sizing:border-box"></div>
<div class="t" style="left:1430.7px;top:705.25px;font-size:15px;color:#1f3340;transform:scaleX(1.15);transform-origin:0 0;">Qiwei</div>
<div class="t" style="left:1606.2px;top:705.25px;font-size:15px;color:#1f3340;transform:scaleX(1.16);transform-origin:0 0;">Jin</div>
<div class="t" style="left:1770.2px;top:701.75px;font-size:13px;color:#26343e;">1 month ago</div>
<div class="t" style="left:1774.3px;top:714.35px;font-size:13px;color:#8796a1;letter-spacing:-0.3px;">Lead added</div>
<div class="r" style="left:1148px;top:748px;width:24px;height:24px;border:1.5px solid #0175b3;border-radius:4px;box-sizing:border-box"></div>
<div class="t" style="left:1182.6px;top:747.62px;font-size:15.5px;color:#1d2c37;letter-spacing:0.6px;-webkit-text-stroke:0.3px #1d2c37;">Irina Tarasyuk</div>
<div class="t" style="left:1182.6px;top:765.32px;font-size:13.5px;color:#151515;letter-spacing:-0.15px;">Rates Algo Trading Quant at Barcl...</div>
<div class="r" style="left:1412px;top:743px;width:165px;height:40px;border:1px solid #c9d6df;border-radius:4px;box-sizing:border-box"></div>
<div class="r" style="left:1587px;top:743px;width:165px;height:40px;border:1px solid #c9d6df;border-radius:4px;box-sizing:border-box"></div>
<div class="t" style="left:1430.7px;top:755.25px;font-size:15px;color:#1f3340;transform:scaleX(1.15);transform-origin:0 0;">Irina</div>
<div class="t" style="left:1606.2px;top:755.25px;font-size:15px;color:#1f3340;transform:scaleX(1.16);transform-origin:0 0;">Tarasyuk</div>
<div class="t" style="left:1770.2px;top:751.75px;font-size:13px;color:#26343e;">1 month ago</div>
<div class="t" style="left:1774.3px;top:764.35px;font-size:13px;color:#8796a1;letter-spacing:-0.3px;">Lead added</div>
<div class="r" style="left:1148px;top:798px;width:24px;height:24px;border:1.5px solid #0175b3;border-radius:4px;box-sizing:border-box"></div>
<div class="t" style="left:1182.6px;top:797.62px;font-size:15.5px;color:#1d2c37;letter-spacing:0.6px;-webkit-text-stroke:0.3px #1d2c37;">Paul Woodward</div>
<div class="t" style="left:1182.6px;top:815.32px;font-size:13.5px;color:#151515;letter-spacing:-0.15px;">Executive Director at Morgan Stan...</div>
<div class="r" style="left:1412px;top:793px;width:165px;height:40px;border:1px solid #c9d6df;border-radius:4px;box-sizing:border-box"></div>
<div class="r" style="left:1587px;top:793px;width:165px;height:40px;border:1px solid #c9d6df;border-radius:4px;box-sizing:border-box"></div>
<div class="t" style="left:1430.7px;top:805.25px;font-size:15px;color:#1f3340;transform:scaleX(1.15);transform-origin:0 0;">Paul</div>
<div class="t" style="left:1606.2px;top:805.25px;font-size:15px;color:#1f3340;transform:scaleX(1.16);transform-origin:0 0;">Woodward</div>
<div class="t" style="left:1770.2px;top:801.75px;font-size:13px;color:#26343e;">1 month ago</div>
<div class="t" style="left:1774.3px;top:814.35px;font-size:13px;color:#8796a1;letter-spacing:-0.3px;">Lead added</div>
<div class="r" style="left:1148px;top:848px;width:24px;height:24px;border:1.5px solid #0175b3;border-radius:4px;box-sizing:border-box"></div>
<div class="t" style="left:1182.6px;top:847.62px;font-size:15.5px;color:#1d2c37;letter-spacing:0.6px;-webkit-text-stroke:0.3px #1d2c37;">Gilbert Verdian</div>
<div class="t" style="left:1182.6px;top:865.32px;font-size:13.5px;color:#151515;letter-spacing:-0.15px;">CEO at Quant</div>
<div class="r" style="left:1412px;top:843px;width:165px;height:40px;border:1px solid #c9d6df;border-radius:4px;box-sizing:border-box"></div>
<div class="r" style="left:1587px;top:843px;width:165px;height:40px;border:1px solid #c9d6df;border-radius:4px;box-sizing:border-box"></div>
<div class="t" style="left:1430.7px;top:855.25px;font-size:15px;color:#1f3340;transform:scaleX(1.15);transform-origin:0 0;">Gilbert</div>
<div class="t" style="left:1606.2px;top:855.25px;font-size:15px;color:#1f3340;transform:scaleX(1.16);transform-origin:0 0;">Verdian</div>
<div class="t" style="left:1770.2px;top:851.75px;font-size:13px;color:#26343e;">1 month ago</div>
<div class="t" style="left:1774.3px;top:864.35px;font-size:13px;color:#8796a1;letter-spacing:-0.3px;">Lead added</div>
<div class="r" style="left:1862px;top:293px;width:4px;height:597px;background:#f1f3f8"></div>
<div class="r" style="left:1862px;top:293px;width:4px;height:475px;background:#0175b3"></div>
</body></html>
